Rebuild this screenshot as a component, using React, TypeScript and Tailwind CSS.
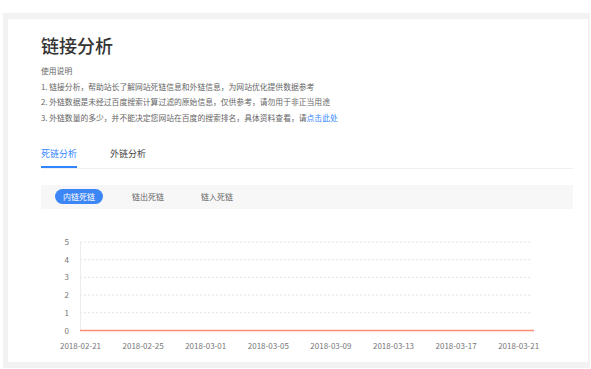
const yTicks = [5, 4, 3, 2, 1, 0]
const dates = ['2018-02-21', '2018-02-25', '2018-03-01', '2018-03-05', '2018-03-09', '2018-03-13', '2018-03-17', '2018-03-21']

function Chart() {
  const base = 121.5
  const step = 17.7
  return (
    <svg width="532" height="153" className="block">
      {yTicks.map((v) => {
        const y = base - v * step
        return (
          <g key={v}>
            {v > 0 && <line x1="39" x2="491" y1={y} y2={y} stroke="#e3e3e3" strokeWidth="1" strokeDasharray="2 2" />}
            <text x="28" y={y + 3} textAnchor="end" fontSize="8" fill="#777">{v}</text>
          </g>
        )
      })}
      <line x1="39.5" x2="39.5" y1="33" y2={base} stroke="#ececec" strokeWidth="1" />
      <line x1="39" x2="493" y1={base} y2={base} stroke="#fb8b72" strokeWidth="1.5" />
      {dates.map((d, i) => (
        <text key={d} x={39.5 + i * 62.6} y="140" textAnchor="middle" fontSize="8" fill="#777">{d}</text>
      ))}
    </svg>
  )
}

export default function App() {
  return (
    <div className="w-[591px] h-[369px] bg-white pt-[13px] pl-[3px] pr-[1px] font-['Noto_Sans_CJK_SC',sans-serif]">
      <div className="h-[355px] bg-[#f2f2f2] pt-[6px] pl-[5px] pr-[2px] pb-[6px]">
        <div className="h-full bg-white pl-[33px] pr-[15px] pt-[14px]">
          <h1 className="text-[18px] leading-[24px] font-medium text-[#333]">链接分析</h1>
          <div className="mt-[6px] text-[7.8px] leading-[15.5px] text-[#666]">
            <p>使用说明</p>
            <p>1. 链接分析，帮助站长了解网站死链信息和外链信息，为网站优化提供数据参考</p>
            <p>2. 外链数据是未经过百度搜索计算过滤的原始信息，仅供参考，请勿用于非正当用途</p>
            <p>
              3. 外链数量的多少，并不能决定您网站在百度的搜索排名，具体资料查看，请<span className="text-[#3385ff]">点击此处</span>
            </p>
          </div>

          <div className="mt-[21.5px] flex gap-[33px] border-b border-[#f0f0f0] text-[9px] leading-[14px]">
            <div className="pb-[5px] border-b-2 border-[#3385ff] text-[#3385ff]">死链分析</div>
            <div className="pb-[7px] text-[#444]">外链分析</div>
          </div>

          <div className="mt-[16px] h-[24px] bg-[#f7f7f7] pl-[14px] flex items-center gap-[21px] text-[8px]">
            <div className="w-[48px] h-[15px] rounded-full bg-[#3d86f5] text-white flex items-center justify-center">内链死链</div>
            <div className="w-[48px] text-center text-[#666]">链出死链</div>
            <div className="w-[48px] text-center text-[#666]">链入死链</div>
          </div>

          <Chart />
        </div>
      </div>
    </div>
  )
}
